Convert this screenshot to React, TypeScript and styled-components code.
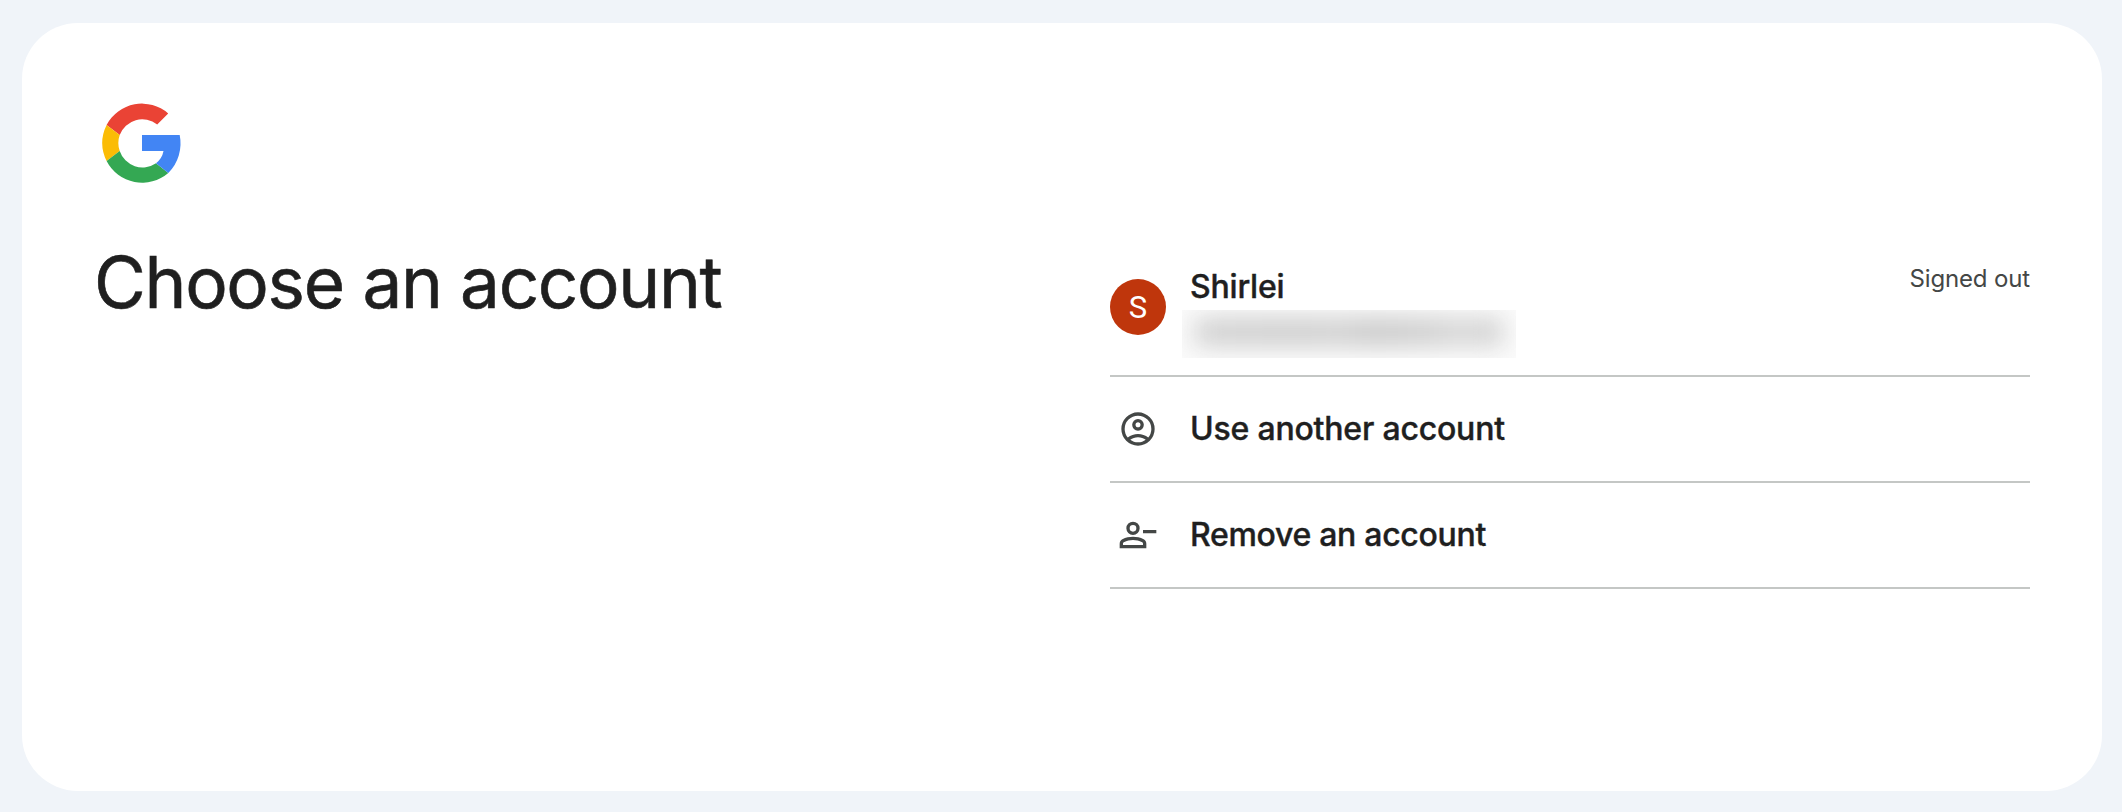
import React from "react";
import styled, { createGlobalStyle } from "styled-components";

const GlobalStyle = createGlobalStyle`
  * { box-sizing: border-box; }
  body {
    margin: 0;
    background: #f0f4f9;
    color: #1f1f1f;
    font-family: Inter, "Liberation Sans", sans-serif;
  }
`;

const Page = styled.div`
  height: 812px;
  padding: 23px 20px 21px 22px;
`;

const Card = styled.main`
  height: 100%;
  padding: 72px;
  border-radius: 56px;
  background: #fff;
`;

const Logo = styled.svg`
  display: block;
  width: 96px;
  height: 96px;
`;

const Columns = styled.div`
  display: grid;
  grid-template-columns: 1fr 920px;
  margin-top: 48px;
`;

const Title = styled.h1`
  margin: 0;
  font-size: 71px;
  line-height: 86px;
  font-weight: 400;
  letter-spacing: -1.35px;
  -webkit-text-stroke: 0.6px #1f1f1f;
`;

const AccountList = styled.ul`
  margin: 18px 0 0;
  padding: 0;
  list-style: none;
`;

const Row = styled.li<{ $height: number; $lift?: number }>`
  display: flex;
  align-items: center;
  height: ${(p) => p.$height}px;
  padding-bottom: ${(p) => p.$lift ?? 0}px;
  border-bottom: 2px solid #c4c7c5;
`;

const Leading = styled.div`
  display: flex;
  justify-content: center;
  width: 56px;
  margin-right: 24px;
`;

const Avatar = styled.div`
  width: 56px;
  height: 56px;
  border-radius: 50%;
  background: #bf360c;
  color: #fff;
  font: 400 31px/57px Roboto, sans-serif;
  text-align: center;
`;

const RowIcon = styled.svg`
  display: block;
  width: 40px;
  height: 40px;
  fill: #444746;
`;

const Label = styled.div<{ $spacing: number }>`
  font-size: 32px;
  line-height: 40px;
  font-weight: 500;
  white-space: nowrap;
  letter-spacing: ${(p) => p.$spacing}px;
  -webkit-text-stroke: 0.4px #1f1f1f;
`;

const Identity = styled.div`
  flex: 1;
  height: 92px;
  padding-top: 6px;
`;

const HiddenEmail = styled.div`
  width: 334px;
  height: 48px;
  margin: 3px 0 0 -8px;
  overflow: hidden;
  background: #fbfbfb;
`;

const EmailSmudge = styled.div`
  height: 28px;
  margin: 8px 13px;
  background: linear-gradient(90deg, #d0d0d0, #cccccc 35%, #d0d0d0 44%, #c8c8c8 58%, #cecece 77%, #d6d6d6 85%, #d0d0d0);
  filter: blur(12px);
`;

const Status = styled.div`
  align-self: flex-start;
  margin-top: 6px;
  color: #444746;
  font-size: 24px;
  line-height: 32px;
  letter-spacing: -0.15px;
`;

function GoogleLogo() {
  return (
    <Logo viewBox="0 0 48 48" aria-label="Google">
      <path fill="#ea4335" d="M6.3 15A20 20 0 0 1 37.1 9.2L31.6 14.8A12 12 0 0 0 12.85 20Z" />
      <path fill="#fbbc05" d="M6.3 15A20.4 20.4 0 0 0 6.3 33L12.85 28A12.2 12.2 0 0 1 12.85 20Z" />
      <path fill="#34a853" d="M6.3 33A20 20 0 0 0 37.15 39L31 34.1A12 12 0 0 1 12.85 28Z" />
      <path fill="#4285f4" d="M24 20H42.85A21 21 0 0 1 37.15 39L31 34.1A10 10 0 0 0 34.75 28H24Z" />
    </Logo>
  );
}

function AccountCircle() {
  return (
    <RowIcon viewBox="0 0 24 24">
      <path d="M5.85 17.1q1.275-.975 2.85-1.537T12 15t3.3.563 2.85 1.537q.875-1.025 1.363-2.325T20 12q0-3.325-2.337-5.663T12 4 6.337 6.338 4 12q0 1.475.488 2.775T5.85 17.1M12 13q-1.475 0-2.488-1.012T8.5 9.5t1.013-2.488T12 6t2.488 1.013T15.5 9.5t-1.012 2.488T12 13m0 9q-2.075 0-3.9-.788t-3.175-2.137-2.137-3.175T2 12t.788-3.9 2.137-3.175 3.175-2.137T12 2t3.9.788 3.175 2.137 2.138 3.175T22 12t-.788 3.9-2.137 3.175-3.175 2.138T12 22m0-2q1.325 0 2.5-.387t2.15-1.113q-.975-.725-2.15-1.112T12 17t-2.5.388-2.15 1.112q.975.725 2.15 1.113T12 20m0-9q.65 0 1.075-.425T13.5 9.5t-.425-1.075T12 8t-1.075.425T10.5 9.5t.425 1.075T12 11" />
    </RowIcon>
  );
}

function PersonRemove() {
  return (
    <RowIcon viewBox="0 0 24 24">
      <path
        fillRule="evenodd"
        d="M15 9h8v2h-8ZM9 4a4 4 0 1 0 0 8 4 4 0 0 0 0-8Zm0 2a2 2 0 1 1 0 4 2 2 0 0 1 0-4ZM1 20v-2.8q0-.85.44-1.56T2.6 14.55Q4.15 13.78 5.75 13.39 7.35 13 9 13t3.25.39 3.15 1.16q.73.37 1.16 1.09T17 17.2V20Zm2-2h12v-.8q0-.27-.14-.5t-.36-.35Q13.15 15.68 11.78 15.34 10.4 15 9 15t-2.77.34T3.5 16.35q-.22.12-.36.35T3 17.2Z"
      />
    </RowIcon>
  );
}

export default function App() {
  return (
    <>
      <GlobalStyle />
      <Page>
        <Card>
          <GoogleLogo />
          <Columns>
            <Title>Choose an account</Title>
            <AccountList>
              <Row $height={120} $lift={18}>
                <Leading>
                  <Avatar>S</Avatar>
                </Leading>
                <Identity>
                  <Label $spacing={-0.2}>Shirlei</Label>
                  <HiddenEmail>
                    <EmailSmudge />
                  </HiddenEmail>
                </Identity>
                <Status>Signed out</Status>
              </Row>
              <Row $height={106}>
                <Leading>
                  <AccountCircle />
                </Leading>
                <Label $spacing={-0.2}>Use another account</Label>
              </Row>
              <Row $height={106}>
                <Leading>
                  <PersonRemove />
                </Leading>
                <Label $spacing={-0.3}>Remove an account</Label>
              </Row>
            </AccountList>
          </Columns>
        </Card>
      </Page>
    </>
  );
}
